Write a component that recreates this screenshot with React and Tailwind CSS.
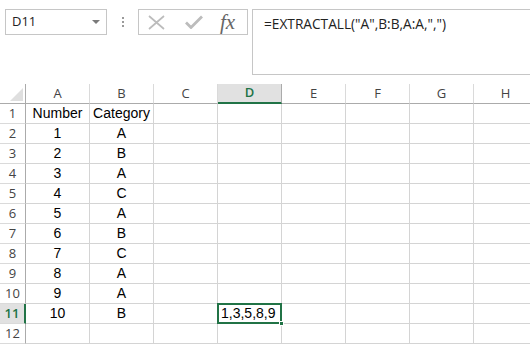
import React from 'react';

const cols = ['A', 'B', 'C', 'D', 'E', 'F', 'G', 'H'];
const data = [
  ['Number', 'Category'],
  ['1', 'A'],
  ['2', 'B'],
  ['3', 'A'],
  ['4', 'C'],
  ['5', 'A'],
  ['6', 'B'],
  ['7', 'C'],
  ['8', 'A'],
  ['9', 'A'],
  ['10', 'B'],
  ['', ''],
];

function HeaderCell({ label, active }) {
  return (
    <div
      className={
        active
          ? 'w-[64px] h-[20px] shrink-0 flex items-center justify-center bg-[#e1e1e1] border-r border-[#ababab] border-b-2 border-b-[#217346] text-[#217346] font-semibold'
          : 'w-[64px] h-[20px] shrink-0 flex items-center justify-center border-r border-b border-r-[#dadada] border-b-[#ababab] text-[#444]'
      }
    >
      {label}
    </div>
  );
}

export default function App() {
  return (
    <div className="w-[530px] h-[351px] overflow-hidden bg-white">
      {/* Formula bar */}
      <div className="h-[84px] flex items-start pt-[9px] pl-[5px]" style={{ fontFamily: '"Open Sans", sans-serif' }}>
        <div className="w-[102px] h-[26px] border border-[#c6c6c6] flex items-center justify-between pl-[6px] pr-[6px] text-[13px] text-[#222]">
          <span>D11</span>
          <svg width="8" height="4" viewBox="0 0 8 4"><path d="M0 0h8L4 4z" fill="#7a7a7a" /></svg>
        </div>
        <div className="w-[31px] h-[26px] flex flex-col items-center justify-center gap-[2px]">
          <span className="w-[2px] h-[2px] bg-[#9a9a9a]" />
          <span className="w-[2px] h-[2px] bg-[#9a9a9a]" />
          <span className="w-[2px] h-[2px] bg-[#9a9a9a]" />
        </div>
        <div className="w-[110px] h-[26px] border border-[#c6c6c6] flex items-center pl-[9px]">
          <svg width="17" height="15" viewBox="0 0 17 15">
            <path d="M1 1l15 13M16 1L1 14" stroke="#bcbcbc" strokeWidth="1.7" fill="none" />
          </svg>
          <svg className="ml-[20px]" width="18" height="14" viewBox="0 0 18 14">
            <path d="M1 7.5l5 5L17 1.5" stroke="#bcbcbc" strokeWidth="2.8" fill="none" />
          </svg>
          <span
            className="ml-[17px] text-[21px] italic text-[#666] leading-none"
            style={{ fontFamily: '"Liberation Serif", serif' }}
          >
            fx
          </span>
        </div>
        <div className="ml-[4px] flex-1 h-[66px] border-l border-t border-b border-[#c6c6c6] pl-[11px] pt-[4px] text-[13.7px] text-[#222]">
          =EXTRACTALL("A",B:B,A:A,",")
        </div>
      </div>

      {/* Grid */}
      <div className="flex flex-col text-[13px]" style={{ fontFamily: '"Open Sans", sans-serif' }}>
        <div className="flex">
          <div className="w-[26px] h-[20px] shrink-0 border-r border-b border-[#ababab] flex items-end justify-end p-[2px]">
            <svg width="13" height="13" viewBox="0 0 13 13"><path d="M13 0v13H0z" fill="#dfdfdf" /></svg>
          </div>
          {cols.map((c) => (
            <HeaderCell key={c} label={c} active={c === 'D'} />
          ))}
        </div>
        {data.map((row, i) => {
          const n = i + 1;
          const active = n === 11;
          return (
            <div key={n} className="flex">
              <div
                className={
                  active
                    ? 'w-[26px] h-[20px] shrink-0 flex items-center justify-center bg-[#e1e1e1] border-b border-[#dadada] border-r-2 border-r-[#217346] text-[#217346] font-semibold'
                    : 'w-[26px] h-[20px] shrink-0 flex items-center justify-center border-b border-r border-b-[#dadada] border-r-[#ababab] text-[#444]'
                }
              >
                {n}
              </div>
              {cols.map((c, j) => {
                const sel = active && c === 'D';
                let text = row[j] || '';
                if (sel) text = '1,3,5,8,9';
                return (
                  <div
                    key={c}
                    className={
                      sel
                        ? 'relative w-[64px] h-[20px] shrink-0 border-r border-b border-[#d4d4d4] flex items-center text-[14px] text-black'
                        : 'w-[64px] h-[20px] shrink-0 border-r border-b border-[#d4d4d4] flex items-center justify-center text-[14px] text-black'
                    }
                    style={{ fontFamily: '"Liberation Sans", sans-serif' }}
                  >
                    {sel ? (
                      <>
                        <div className="absolute left-[-1px] top-[-1px] w-[65px] h-[21px] border-2 border-[#217346]" />
                        <div className="absolute right-[-3px] bottom-[-3px] w-[5px] h-[5px] bg-[#217346] border border-white" />
                        <span className="pl-[3px]">{text}</span>
                      </>
                    ) : (
                      text
                    )}
                  </div>
                );
              })}
            </div>
          );
        })}
      </div>
    </div>
  );
}
